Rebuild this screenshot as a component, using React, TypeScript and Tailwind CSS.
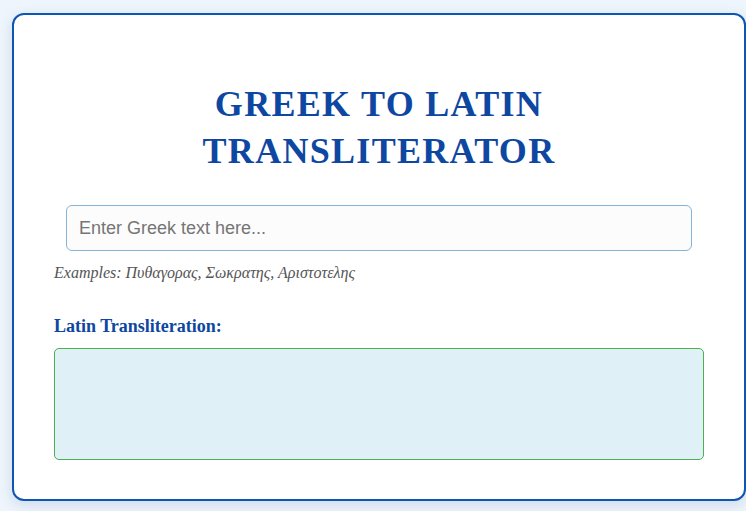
import React, { useState } from 'react';

export default function App() {
    const [text, setText] = useState('');

    return (
        <div className="min-h-[511px] w-full bg-[#eef5fc] pt-[13px] pl-[12px] overflow-hidden">
            <div className="w-[734px] h-[488px] bg-white border-2 border-[#0d56b3] rounded-[12px] shadow-[0_4px_14px_rgba(30,70,130,0.15)] px-10 pt-[66px]">
                <h1 className="text-center font-['Liberation_Serif',serif] font-bold text-[36px] leading-[47px] tracking-[1.3px] text-[#0d47a1]">
                    GREEK TO LATIN
                    <br />
                    TRANSLITERATOR
                </h1>

                <div className="mt-[30px] px-3">
                    <input
                        type="text"
                        value={text}
                        onChange={(e) => setText(e.target.value)}
                        placeholder="Enter Greek text here..."
                        className="w-full h-[46px] px-3 rounded-[6px] border border-[#86b4d4] bg-[#fcfcfc] font-['Liberation_Sans',sans-serif] text-[18px] text-[#333] placeholder:text-[#757575] outline-none"
                    />
                </div>

                <p className="mt-[12px] font-['Liberation_Serif',serif] italic text-[16px] leading-[20px] text-[#555]">
                    Examples: Πυθαγορας, Σωκρατης, Αριστοτελης
                </p>

                <h3 className="mt-[32px] font-['Liberation_Serif',serif] font-bold text-[18px] leading-[22px] text-[#0d47a1]">
                    Latin Transliteration:
                </h3>

                <div className="mt-[11px] h-[112px] rounded-[5px] border border-[#4caf50] bg-[#e0f0f7] px-3 py-2 font-['Liberation_Serif',serif] text-[16px] text-[#222]">
                    {text}
                </div>
            </div>
        </div>
    );
}
